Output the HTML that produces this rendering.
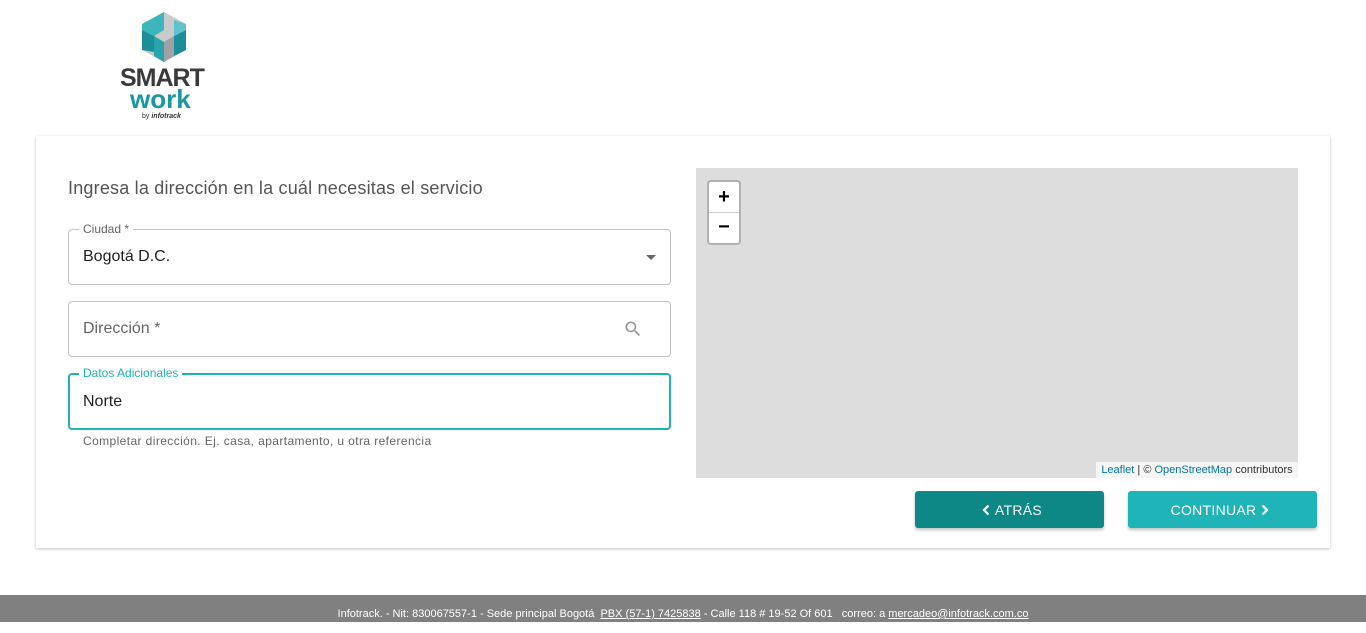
<!DOCTYPE html>
<html><head><meta charset="utf-8"><style>
body{margin:0;width:1366px;height:622px;background:#fff;font-family:"Liberation Sans",sans-serif;position:relative;overflow:hidden}
.abs{position:absolute}
.card{left:36px;top:136px;width:1294px;height:412px;background:#fff;box-shadow:0 1px 3px rgba(0,0,0,.25)}
.field{position:absolute;left:68px;width:601px;border:1px solid #c4c4c4;border-radius:4px;background:#fff}
.lbl{position:absolute;top:-8px;left:10px;background:#fff;padding:0 4px;font-size:12px;color:#666}
.btn{position:absolute;top:491px;height:37px;color:#fff;font-size:14px;display:flex;align-items:center;justify-content:center;border-radius:3px;box-shadow:0 2px 3px rgba(0,0,0,.25);letter-spacing:.3px}
.btn svg{margin:0 5px}
</style></head><body>
<svg class="abs" style="left:140px;top:12px" width="48" height="50" viewBox="0 0 48 50">
<polygon points="24,0 46,12 46,38 24,50 2,38 2,12" fill="#c9cacc"/>
<polygon points="2,12 24,0 24,18 14,24 2,18" fill="#3db5bd"/>
<polygon points="2,18 14,24 14,40 2,38" fill="#1a8f97"/>
<polygon points="14,24 24,30 24,50 14,44" fill="#27a4ac"/>
<polygon points="24,30 34,24 34,44 24,50" fill="#9fa1a4"/>
<polygon points="34,24 46,18 46,38 34,44" fill="#1a8f97"/>
<polygon points="34,8 46,12 46,18 34,24" fill="#5ec3ca"/>
</svg>
<div class="abs" style="left:120px;top:64px;font-size:25px;font-weight:bold;color:#3a3a3a;letter-spacing:-1px">SMART</div>
<div class="abs" style="left:130px;top:84px;font-size:26px;font-weight:bold;color:#17999f">work</div>
<div class="abs" style="left:142px;top:113px;font-size:7px;color:#333">by <b><i>infotrack</i></b></div>
<div class="abs card"></div>
<div class="abs" style="left:68px;top:178px;font-size:18px;color:#555;letter-spacing:.2px">Ingresa la dirección en la cuál necesitas el servicio</div>
<div class="field" style="top:229px;height:54px"><span class="lbl">Ciudad *</span><span class="abs" style="left:14px;top:18px;font-size:16px;color:#222">Bogotá D.C.</span><span class="abs" style="right:14px;top:25px;border:5px solid transparent;border-top-color:#666;border-bottom:0"></span></div>
<div class="field" style="top:301px;height:54px"><span class="abs" style="left:14px;top:18px;font-size:16px;color:#666">Dirección *</span>
<svg class="abs" style="left:554px;top:17px" width="20" height="20" viewBox="0 0 24 24"><path fill="#999" d="M15.5 14h-.8l-.3-.3A6.5 6.5 0 1 0 9.5 16a6.5 6.5 0 0 0 4.2-1.6l.3.3v.8l5 5 1.5-1.5-5-5zm-6 0A4.5 4.5 0 1 1 14 9.5 4.5 4.5 0 0 1 9.5 14z"/></svg></div>
<div class="field" style="top:373px;height:53px;border:2px solid #1fb3b8;left:68px;width:599px"><span class="lbl" style="color:#1fb3b8;left:9px;top:-9px">Datos Adicionales</span><span class="abs" style="left:13px;top:18px;font-size:16px;color:#222">Norte</span></div>
<div class="abs" style="left:83px;top:434px;font-size:12px;color:#666;letter-spacing:.4px">Completar dirección. Ej. casa, apartamento, u otra referencia</div>
<div class="abs" style="left:696px;top:168px;width:602px;height:310px;background:#ddd"></div>
<div class="abs" style="left:707px;top:180px;width:30px;height:61px;border:2px solid rgba(0,0,0,.2);border-radius:4px;background:#fff;background-clip:padding-box">
<div style="height:30px;border-bottom:1px solid #ccc;text-align:center;font:bold 20px/30px 'Liberation Sans';color:#000">+</div>
<div style="height:30px;text-align:center;font:bold 20px/28px 'Liberation Sans';color:#000">−</div></div>
<div class="abs" style="left:1096px;top:462px;width:202px;height:16px;background:rgba(255,255,255,.7);font-size:11px;line-height:16px;color:#333;text-align:center"><span style="color:#0078a8">Leaflet</span> | © <span style="color:#0078a8">OpenStreetMap</span> contributors</div>
<div class="btn" style="left:915px;width:189px;background:#0e8787"><svg width="8" height="12" viewBox="0 0 8 12"><path d="M6.5 1.5 2 6l4.5 4.5" stroke="#fff" stroke-width="2.2" fill="none"/></svg>ATRÁS</div>
<div class="btn" style="left:1128px;width:189px;background:#1fb5b8">CONTINUAR<svg width="8" height="12" viewBox="0 0 8 12"><path d="M1.5 1.5 6 6l-4.5 4.5" stroke="#fff" stroke-width="2.2" fill="none"/></svg></div>
<div class="abs" style="left:0;top:595px;width:1366px;height:27px;background:#808080;color:#fff;font-size:11px;text-align:center;line-height:38px">Infotrack. - Nit: 830067557-1 - Sede principal Bogotá &nbsp;<u>PBX (57-1) 7425838</u> - Calle 118 # 19-52 Of 601 &nbsp; correo: a <u>mercadeo@infotrack.com.co</u></div>
</body></html>
